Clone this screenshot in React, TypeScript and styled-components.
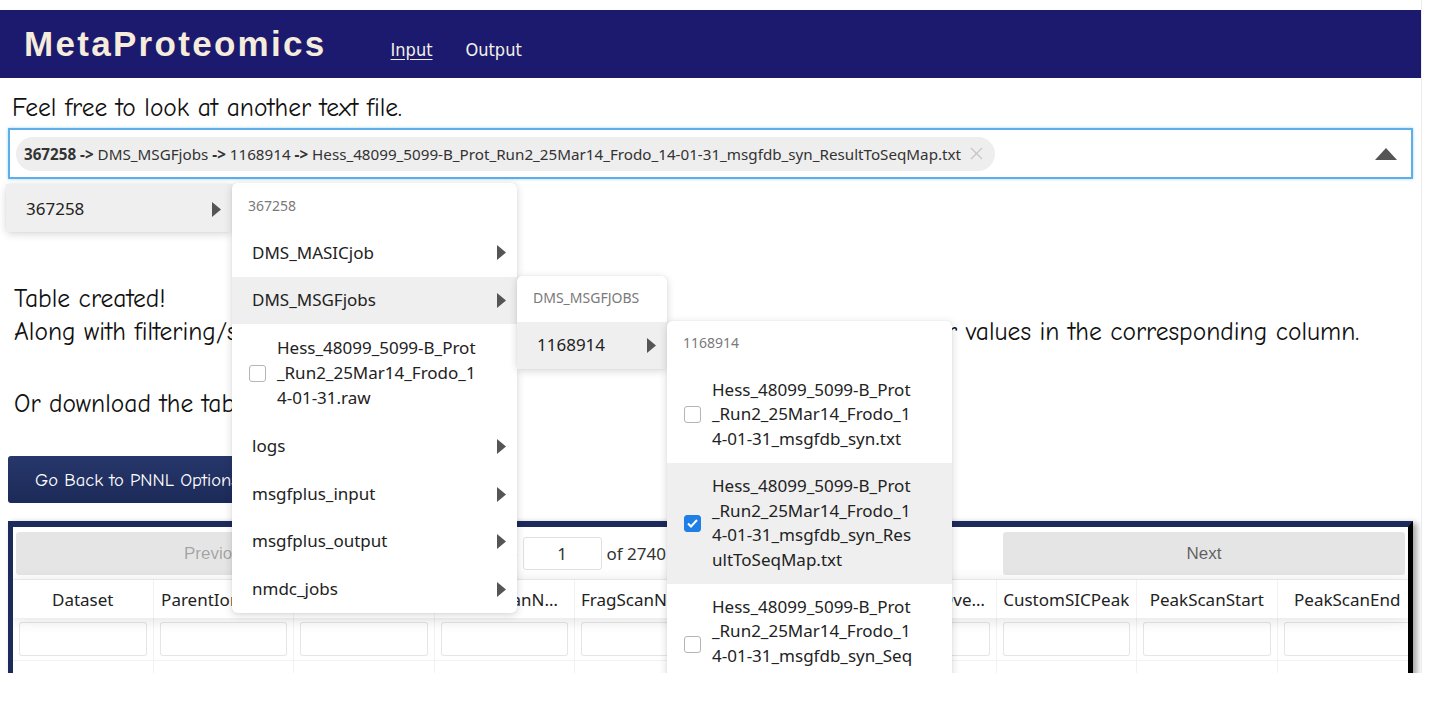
import React from "react";
import styled, { createGlobalStyle } from "styled-components";

const GlobalStyle = createGlobalStyle`
  html, body { margin: 0; padding: 0; background: #ffffff; }
  body { font-family: "Noto Sans", "Open Sans", sans-serif; }
  *, *::before, *::after { box-sizing: border-box; }
`;

const COMIC = `"Comic Sans MS", "Comic Neue", "DejaVu Sans", sans-serif`;
const UI = `"Segoe UI", "Noto Sans", "Open Sans", sans-serif`;

const Frame = styled.div`
  width: 1422px;
  height: 673px;
  overflow: hidden;
  padding-top: 10px;
  border-right: 1px solid #ececec;
  background: #fff;
`;

const Header = styled.header`
  height: 68px;
  background: #1b1a6e;
  display: flex;
  align-items: center;
  padding-left: 24px;
`;

const Logo = styled.div`
  font-family: "Liberation Sans", Arial, sans-serif;
  font-weight: 700;
  font-size: 35px;
  letter-spacing: 2.3px;
  color: #f6ecdc;
  margin-right: 64px;
`;

const NavLink = styled.a<{ $active?: boolean }>`
  font-family: "Liberation Sans Narrow", "DejaVu Sans Condensed", "Roboto Condensed", sans-serif;
  font-size: 18px;
  color: #f4f0ea;
  text-decoration: ${(p) => (p.$active ? "underline" : "none")};
  text-underline-offset: 3px;
  margin: 10px 33px 0 0;
`;

const Content = styled.main`
  padding: 0 8px;
`;

const Intro = styled.p`
  margin: 13px 0 4px 4px;
  font-family: ${COMIC};
  font-size: 25.5px;
  line-height: 33px;
  color: #111;
`;

const SelectWrap = styled.div`
  position: relative;
  z-index: 5;
`;

const SelectBox = styled.div`
  height: 51px;
  border: 2px solid #5eaee8;
  box-shadow: 0 0 3px #a6d4f5;
  display: flex;
  align-items: center;
  padding: 0 14px 0 6px;
  background: #fff;
`;

const Chip = styled.div`
  height: 34px;
  border-radius: 17px;
  background: #eeeeee;
  display: flex;
  align-items: center;
  padding: 0 12px 0 8px;
  font-family: ${UI};
  font-size: 15.2px;
  color: #333;
  white-space: nowrap;
  b {
    font-weight: 700;
  }
`;

const ChipClose = styled.svg`
  margin-left: 9px;
  flex: none;
`;

const Caret = styled.svg`
  margin-left: auto;
`;

const Menu = styled.div<{ $w: number }>`
  position: absolute;
  width: ${(p) => p.$w}px;
  background: #fff;
  border-radius: 5px;
  box-shadow: 0 2px 8px rgba(0, 0, 0, 0.16), 0 0 1px rgba(0, 0, 0, 0.18);
  font-family: ${UI};
  font-size: 17px;
  color: #222;
`;

const RootMenu = styled(Menu)`
  top: 56px;
  left: -2px;
`;

const SubMenu = styled(Menu)`
  left: 100%;
  top: -1px;
`;

const GroupLabel = styled.div`
  height: 46px;
  display: flex;
  align-items: center;
  padding-left: 16px;
  font-size: 14px;
  color: #7a7a7a;
  text-transform: uppercase;
`;

const Item = styled.div<{ $active?: boolean; $pad?: number }>`
  position: relative;
  display: flex;
  align-items: center;
  padding: ${(p) => p.$pad ?? 11.5}px 10px;
  padding-left: 20px;
  line-height: 24.7px;
  background: ${(p) => (p.$active ? "#efefef" : "transparent")};
`;

const RootItem = styled(Item)`
  padding-top: 13px;
  padding-bottom: 10px;
`;

const Arrow = styled.svg`
  margin-left: auto;
  flex: none;
`;

const Check = styled.span<{ $on?: boolean }>`
  flex: none;
  width: 17px;
  height: 17px;
  border-radius: 3px;
  margin: 0 11px 0 -3px;
  border: 1px solid ${(p) => (p.$on ? "#1f7fe6" : "#b5b5b5")};
  background: ${(p) => (p.$on ? "#1f7fe6" : "#fff")};
  display: flex;
  align-items: center;
  justify-content: center;
`;

const Lines = styled.div`
  display: flex;
  flex-direction: column;
  white-space: nowrap;
`;

const TextBlock = styled.div`
  margin: 103px 0 0 6px;
  font-family: ${COMIC};
  font-size: 25.5px;
  line-height: 33px;
  color: #111;
  white-space: nowrap;
  p {
    margin: 0 0 39px;
  }
  p:last-child {
    margin-bottom: 36px;
  }
`;

const BackButton = styled.button`
  display: block;
  height: 47px;
  margin: 0 0 18px 0;
  padding: 0 20px 0 27px;
  border: none;
  border-radius: 3px;
  background: linear-gradient(#27376b, #1c2a58);
  color: #fff;
  font-family: ${COMIC};
  font-size: 18.5px;
`;

const TableCard = styled.div`
  border-top: 6px solid #1c2a5c;
  border-left: 5px solid #1c2a5c;
  border-right: 5px solid #000;
  box-shadow: 4px 2px 6px rgba(0, 0, 0, 0.35);
  overflow: hidden;
  height: 200px;
`;

const Pagination = styled.div`
  display: flex;
  align-items: center;
  padding: 5px 3px 4px;
  border-bottom: 1px solid rgba(0, 0, 0, 0.06);
`;

const PageButton = styled.button<{ $disabled?: boolean }>`
  flex: 1;
  height: 43px;
  border: none;
  border-radius: 3px;
  background: rgba(0, 0, 0, 0.1);
  font-family: "Liberation Sans", Arial, sans-serif;
  font-size: 17px;
  color: ${(p) => (p.$disabled ? "rgba(0,0,0,0.3)" : "rgba(0,0,0,0.6)")};
`;

const PageCenter = styled.div`
  flex: 1.5;
  display: flex;
  align-items: center;
  justify-content: space-around;
  font-family: ${UI};
  font-size: 17px;
  color: #333;
`;

const PageInfo = styled.span`
  display: flex;
  align-items: center;
  gap: 5px;
`;

const PageInput = styled.div`
  width: 79px;
  height: 33px;
  border: 1px solid rgba(0, 0, 0, 0.12);
  border-radius: 3px;
  display: flex;
  align-items: center;
  justify-content: center;
`;

const SizeSelect = styled.div`
  width: 158px;
  height: 33px;
  padding: 0 10px;
  border: 1px solid rgba(0, 0, 0, 0.12);
  border-radius: 3px;
  display: flex;
  align-items: center;
`;

const HeadRow = styled.div`
  display: flex;
  height: 38px;
  box-shadow: 0 2px 15px rgba(0, 0, 0, 0.12);
  position: relative;
`;

const HeadCell = styled.div`
  flex: 0 0 140.5px;
  padding: 0 6px;
  border-right: 1px solid rgba(0, 0, 0, 0.05);
  display: flex;
  align-items: center;
  justify-content: center;
  font-family: ${UI};
  font-size: 17px;
  color: #222;
  overflow: hidden;
  span {
    overflow: hidden;
    text-overflow: ellipsis;
    white-space: nowrap;
  }
`;

const FilterRow = styled.div`
  display: flex;
  border-bottom: 1px solid rgba(0, 0, 0, 0.05);
`;

const FilterCell = styled.div`
  flex: 0 0 140.5px;
  padding: 4px 6px;
  border-right: 1px solid rgba(0, 0, 0, 0.05);
`;

const FilterInput = styled.div`
  height: 34px;
  border: 1px solid rgba(0, 0, 0, 0.1);
  border-radius: 3px;
  background: #fff;
`;

const DataRow = styled.div`
  display: flex;
  height: 36px;
  border-bottom: 1px solid rgba(0, 0, 0, 0.05);
`;

const DataCell = styled.div`
  flex: 0 0 140.5px;
  border-right: 1px solid rgba(0, 0, 0, 0.05);
`;

const ArrowIcon = () => (
  <Arrow width="10" height="15" viewBox="0 0 10 15">
    <polygon points="0,0 9,7.5 0,15" fill="#555" />
  </Arrow>
);

const CheckIcon = () => (
  <svg width="11" height="9" viewBox="0 0 11 9">
    <polyline points="1,4.5 4,7.5 10,1" fill="none" stroke="#fff" strokeWidth="2" />
  </svg>
);

const columns = [
  "Dataset",
  "ParentIonIndex",
  "MZ",
  "SurveyScanNumber",
  "FragScanNumber",
  "OptimalPeakApexScanNumber",
  "PeakApexOverrideParentIonIndex",
  "CustomSICPeak",
  "PeakScanStart",
  "PeakScanEnd",
  "PeakScanMaxIntensity",
];

export default function App() {
  return (
    <>
      <GlobalStyle />
      <Frame>
        <Header>
          <Logo>MetaProteomics</Logo>
          <NavLink $active>Input</NavLink>
          <NavLink>Output</NavLink>
        </Header>
        <Content>
          <Intro>Feel free to look at another text file.</Intro>
          <SelectWrap>
            <SelectBox>
              <Chip>
                <b>367258</b>&nbsp;<b>-&gt;</b>&nbsp;DMS_MSGFjobs&nbsp;<b>-&gt;</b>&nbsp;1168914&nbsp;<b>-&gt;</b>
                &nbsp;Hess_48099_5099-B_Prot_Run2_25Mar14_Frodo_14-01-31_msgfdb_syn_ResultToSeqMap.txt
                <ChipClose width="13" height="13" viewBox="0 0 13 13">
                  <path d="M1 1 L12 12 M12 1 L1 12" stroke="#c6c6c6" strokeWidth="1.3" />
                </ChipClose>
              </Chip>
              <Caret width="22" height="12" viewBox="0 0 22 12">
                <polygon points="0,12 11,0 22,12" fill="#555" />
              </Caret>
            </SelectBox>
            <RootMenu $w={226}>
              <RootItem $active>
                367258
                <ArrowIcon />
                <SubMenu $w={285}>
                  <GroupLabel>367258</GroupLabel>
                  <Item>
                    DMS_MASICjob
                    <ArrowIcon />
                  </Item>
                  <Item $active>
                    DMS_MSGFjobs
                    <ArrowIcon />
                    <SubMenu $w={150}>
                      <GroupLabel>DMS_MSGFjobs</GroupLabel>
                      <Item $active>
                        1168914
                        <ArrowIcon />
                        <SubMenu $w={285}>
                          <GroupLabel>1168914</GroupLabel>
                          <Item $pad={11}>
                            <Check />
                            <Lines>
                              <span>Hess_48099_5099-B_Prot</span>
                              <span>_Run2_25Mar14_Frodo_1</span>
                              <span>4-01-31_msgfdb_syn.txt</span>
                            </Lines>
                          </Item>
                          <Item $pad={11} $active>
                            <Check $on>
                              <CheckIcon />
                            </Check>
                            <Lines>
                              <span>Hess_48099_5099-B_Prot</span>
                              <span>_Run2_25Mar14_Frodo_1</span>
                              <span>4-01-31_msgfdb_syn_Res</span>
                              <span>ultToSeqMap.txt</span>
                            </Lines>
                          </Item>
                          <Item $pad={11}>
                            <Check />
                            <Lines>
                              <span>Hess_48099_5099-B_Prot</span>
                              <span>_Run2_25Mar14_Frodo_1</span>
                              <span>4-01-31_msgfdb_syn_Seq</span>
                              <span>ToProteinMap.txt</span>
                            </Lines>
                          </Item>
                        </SubMenu>
                      </Item>
                    </SubMenu>
                  </Item>
                  <Item $pad={12}>
                    <Check />
                    <Lines>
                      <span>Hess_48099_5099-B_Prot</span>
                      <span>_Run2_25Mar14_Frodo_1</span>
                      <span>4-01-31.raw</span>
                    </Lines>
                  </Item>
                  <Item>
                    logs
                    <ArrowIcon />
                  </Item>
                  <Item>
                    msgfplus_input
                    <ArrowIcon />
                  </Item>
                  <Item>
                    msgfplus_output
                    <ArrowIcon />
                  </Item>
                  <Item>
                    nmdc_jobs
                    <ArrowIcon />
                  </Item>
                </SubMenu>
              </RootItem>
            </RootMenu>
          </SelectWrap>

          <TextBlock>
            <p>
              Table created!
              <br />
              Along with filtering/sorting, you can type &gt; or &lt; and a number to get smaller or larger values in the corresponding column.
            </p>
            <p>Or download the table as a CSV file below.</p>
          </TextBlock>

          <BackButton>Go Back to PNNL Options</BackButton>

          <TableCard>
            <Pagination>
              <PageButton $disabled>Previous</PageButton>
              <PageCenter>
                <PageInfo>
                  Page <PageInput>1</PageInput> of 2740
                </PageInfo>
                <SizeSelect>10 rows</SizeSelect>
              </PageCenter>
              <PageButton>Next</PageButton>
            </Pagination>
            <HeadRow>
              {columns.map((c) => (
                <HeadCell key={c}>
                  <span>{c}</span>
                </HeadCell>
              ))}
            </HeadRow>
            <FilterRow>
              {columns.map((c) => (
                <FilterCell key={c}>
                  <FilterInput />
                </FilterCell>
              ))}
            </FilterRow>
            <DataRow>
              {columns.map((c) => (
                <DataCell key={c} />
              ))}
            </DataRow>
          </TableCard>
        </Content>
      </Frame>
    </>
  );
}
